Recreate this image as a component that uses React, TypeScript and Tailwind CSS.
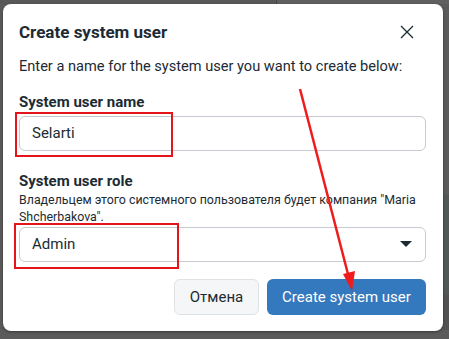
import React from "react";

export default function App() {
  return (
    <div
      className="relative w-[449px] h-[339px] overflow-hidden bg-[#5b5b5b] pt-[4px] pl-[3px]"
      style={{ fontFamily: "Roboto, 'Noto Sans', sans-serif" }}
    >
      {/* dimmed page behind */}
      <div className="absolute left-0 top-0 w-full h-[4px] flex">
        <div className="w-[276px] bg-[#585858]" />
        <div className="flex-1 border-l border-[#474747] bg-[#606060]" />
      </div>
      <div className="absolute left-[443px] top-[195px] w-[6px] h-[100px] bg-[#515856]" />
      <div className="absolute left-[443px] top-[295px] w-[6px] h-[35px] bg-[#525252]" />

      <div className="relative w-[440px] h-[327px] rounded-[8px] bg-white shadow-[0_1px_3px_rgba(0,0,0,0.4)] px-4 pt-[17px] text-[#1c2b33] flex flex-col">
        <div className="flex items-center justify-between">
          <h2 className="text-[17px] font-bold leading-[22px]">Create system user</h2>
          <svg width="14" height="14" viewBox="0 0 14 14" className="mr-[13px]">
            <path d="M1 1 L13 13 M13 1 L1 13" stroke="#1c2b33" strokeWidth="1.3" />
          </svg>
        </div>
        <p className="mt-[13px] text-[14.6px] leading-[20px]">Enter a name for the system user you want to create below:</p>

        <div className="mt-[16px] text-[15px] font-bold leading-[20px]">System user name</div>
        <div className="mt-[4px] relative w-[407px] h-[35px] rounded-[6px] border border-[#c6cbd1] flex items-center pl-[12px] text-[15px]">
          Selarti
          <div className="absolute left-[-5px] top-[-5px] w-[158px] h-[45px] border-2 border-[#e5141b]" />
        </div>

        <div className="mt-[20px] text-[15px] font-bold leading-[20px]">System user role</div>
        <div className="text-[12.4px] leading-[17px]">
          Владельцем этого системного пользователя будет компания "Maria Shcherbakova".
        </div>
        <div className="mt-[2px] relative w-[407px] h-[35px] rounded-[6px] border border-[#c6cbd1] flex items-center justify-between pl-[12px] pr-[13px] text-[15px]">
          <span>Admin</span>
          <svg width="12" height="7" viewBox="0 0 12 7">
            <path d="M0 0 H12 L6 6 Z" fill="#1c2b33" />
          </svg>
          <div className="absolute left-[-6px] top-[-5px] w-[165px] h-[46px] border-2 border-[#e5141b]" />
        </div>

        <div className="mt-[17px] flex justify-end gap-[8px] pr-[1px]">
          <button className="h-[36px] w-[85px] rounded-[6px] border border-[#dfe2e5] bg-[#f5f6f7] text-[15px] text-[#1c2b33]">Отмена</button>
          <button className="h-[36px] w-[159px] rounded-[6px] bg-[#3478bd] text-[15px] text-white">Create system user</button>
        </div>
      </div>

      {/* annotation arrow */}
      <svg className="absolute left-0 top-0 pointer-events-none" width="449" height="339">
        <line x1="300" y1="89" x2="349" y2="278" stroke="#ee1c1c" strokeWidth="2.5" />
        <polygon points="352,291 343,274 355,271" fill="#ee1c1c" />
      </svg>
    </div>
  );
}
